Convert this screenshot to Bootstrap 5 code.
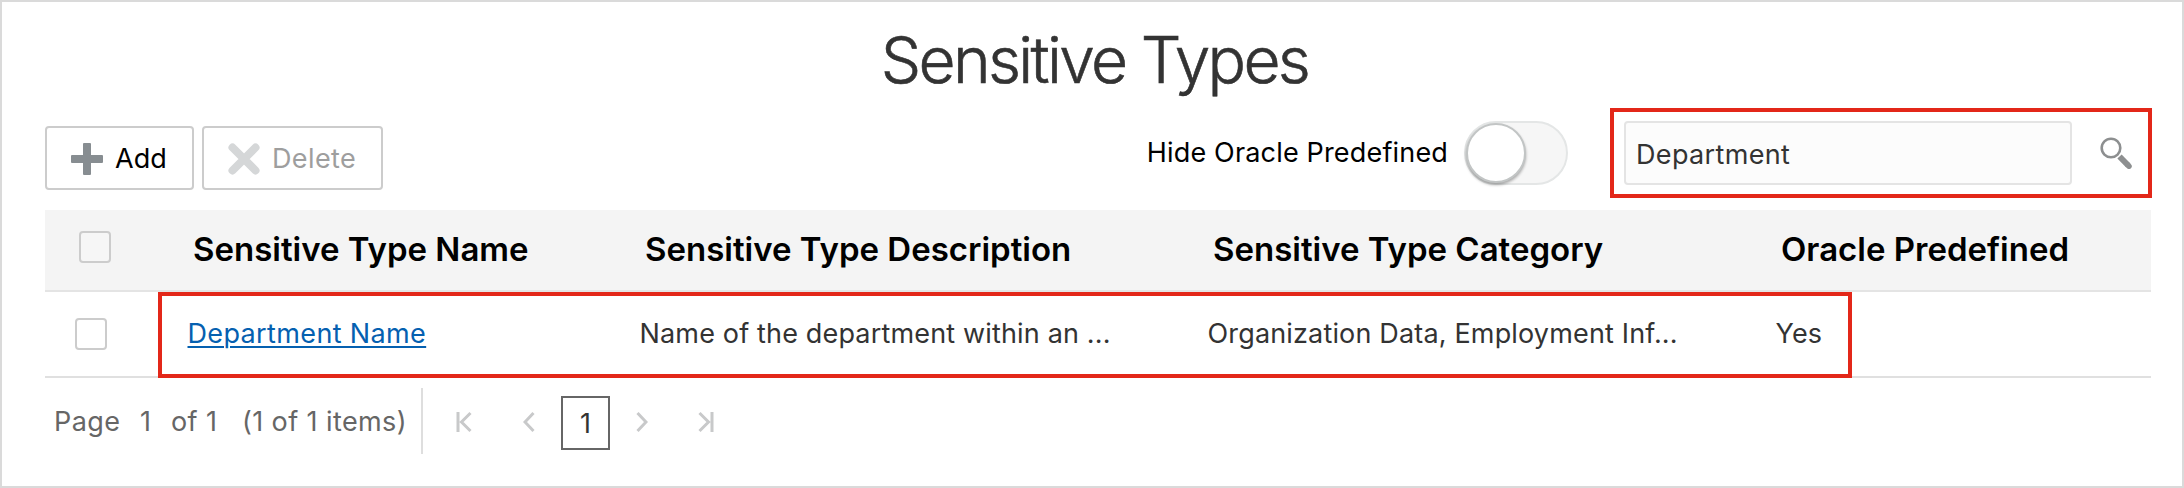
<!DOCTYPE html>
<html lang="en">
<head>
<meta charset="utf-8">
<title>Sensitive Types</title>
<link href="https://cdn.jsdelivr.net/npm/bootstrap@5.3.0/dist/css/bootstrap.min.css" rel="stylesheet">
<style>
  body { font-family: Inter, "Liberation Sans", sans-serif; font-size: 27px; line-height: 32px; color: #333; background: #fff; }
  .page-frame { height: 488px; border: 2px solid #dadada; padding: 0 30px 0 43px; overflow: hidden; }
  .page-title { font-size: 64px; font-weight: 300; line-height: 80px; letter-spacing: -2.68px; margin: 18px 0 0 0; padding-right: 8px; -webkit-text-stroke: .6px #333; }
  .toolbar { height: 90px; margin-top: 8px; }
  .tool-btn { height: 64px; margin-top: 18px; border: 2px solid #ccc; border-radius: 4px; padding: 2px 0 0 24px; font-size: 27px; gap: 12px; background: #fff; color: #000; }
  .tool-btn:disabled { color: #9e9e9e; border-color: #ccc; opacity: 1; background: #fff; }
  .add-btn { width: 149px; }
  .delete-btn { width: 181px; letter-spacing: .38px; }
  .hide-label { color: #000; letter-spacing: .17px; margin-right: 16px; }
  .toggle-track { width: 104px; height: 64px; border: 2px solid #e4e6e6; border-radius: 32px; background: #f6f6f6; margin-right: 42px; }
  .toggle-knob { width: 60px; height: 60px; border-radius: 50%; border: 2px solid #c2c5c5; background: #fff; box-shadow: 0 2px 3px rgba(0,0,0,.32); }
  .search-box { width: 542px; height: 90px; border: 4px solid #e32719; padding: 0 16px 0 10px; }
  .search-input { width: 448px; height: 64px; border: 2px solid #e4e4e4; border-radius: 4px; background: #fcfcfc; color: #333; padding: 2px 0 0 10px; font-size: 27px; letter-spacing: .34px; }
  .search-input:focus { box-shadow: none; }
  .type-grid { width: 2106px; margin-top: 12px; }
  .grid-line { display: grid; grid-template-columns: 113px 452px 568px 568px 1fr; align-items: center; }
  .grid-head { height: 82px; background: #f4f4f4; border-bottom: 2px solid #e4e4e4; font-size: 33px; font-weight: 600; line-height: 40px; color: #000; }
  .grid-head .cell { padding: 0 0 2px 35px; white-space: nowrap; }
  .grid-item { height: 86px; border-bottom: 2px solid #e0e0e0; }
  .grid-item .cell { padding-left: 29.5px; letter-spacing: .16px; white-space: nowrap; }
  .grid-item .name-link { letter-spacing: .36px; color: #0560b0; text-decoration-thickness: 2px; text-underline-offset: 3px; }
  .form-check-input.grid-check { width: 32px; height: 32px; margin: 0 0 0 30px; border: 2px solid #ccc; border-radius: 4px; background-color: #fff; }
  .grid-head .grid-check.form-check-input { margin: -6px 0 0 34px; background-color: #f6f6f6; }
  .row-highlight { left: 113px; top: 0; width: 1694px; height: 86px; border: 4px solid #e32719; pointer-events: none; }
  .pager { margin-top: 10px; height: 66px; color: #666; padding-left: 9px; }
  .pager .count { letter-spacing: .4px; white-space: pre; padding-top: 2px; }
  .pager .divider { width: 2px; height: 66px; background: #dedede; }
  .page-current { width: 49px; height: 54px; border: 2px solid #666; color: #333; padding-top: 1px; margin-top: 4px; }
  .pager svg { fill: none; stroke: #c8c9ca; stroke-width: 3; height: 22px; margin-top: 2px; flex: none; }
</style>
</head>
<body>
<main class="page-frame">
  <h1 class="page-title text-center">Sensitive Types</h1>

  <div class="toolbar d-flex">
    <button class="tool-btn add-btn d-flex align-items-center" type="button">
      <svg width="32" height="32" viewBox="0 0 32 32" aria-hidden="true"><path d="M13 0h6q1 0 1 1v11h11q1 0 1 1v6q0 1-1 1H20v11q0 1-1 1h-6q-1 0-1-1V20H1q-1 0-1-1v-6q0-1 1-1h11V1q0-1 1-1z" fill="#878d91"/></svg>
      <span>Add</span>
    </button>
    <button class="tool-btn delete-btn d-flex align-items-center ms-2" type="button" disabled>
      <svg width="32" height="32" viewBox="0 0 32 32" aria-hidden="true"><path d="M4.500 4.500l23 23M27.500 4.500l-23 23" stroke="#d5d7d8" stroke-width="8" stroke-linecap="round"/></svg>
      <span>Delete</span>
    </button>
    <div class="d-flex align-items-center ms-auto">
      <span class="hide-label">Hide Oracle Predefined</span>
      <div class="toggle-track" role="switch" aria-checked="false"><div class="toggle-knob"></div></div>
      <div class="search-box d-flex align-items-center justify-content-between">
        <input class="form-control search-input" type="text" value="Department" aria-label="Search">
        <svg width="32" height="32" viewBox="0 0 32 32" fill="none" stroke="#8d8f90" aria-hidden="true"><ellipse cx="11" cy="11" rx="9.3" ry="9.3" stroke-width="2.6"/><path d="M19.500 19.500l8.800 9" stroke-width="6"/><path d="M27.800 28l1.200 1.200" stroke-width="5.500" stroke-linecap="round"/></svg>
      </div>
    </div>
  </div>

  <section class="type-grid">
    <div class="grid-line grid-head">
      <input class="form-check-input grid-check" type="checkbox" aria-label="Select all">
      <div class="cell">Sensitive Type Name</div>
      <div class="cell">Sensitive Type Description</div>
      <div class="cell">Sensitive Type Category</div>
      <div class="cell">Oracle Predefined</div>
    </div>
    <div class="grid-line grid-item position-relative">
      <input class="form-check-input grid-check" type="checkbox" aria-label="Select row">
      <div class="cell"><a class="name-link" href="#">Department Name</a></div>
      <div class="cell">Name of the department within an ...</div>
      <div class="cell">Organization Data, Employment Inf...</div>
      <div class="cell">Yes</div>
      <div class="row-highlight position-absolute"></div>
    </div>
  </section>

  <nav class="pager d-flex align-items-center" aria-label="Pagination">
    <span class="count" style="width:86px">Page</span>
    <span class="count" style="width:31px">1</span>
    <span class="count" style="width:71px">of 1</span>
    <span class="count" style="width:179px">(1 of 1 items)</span>
    <span class="divider"></span>
    <svg width="16" viewBox="0 0 16 22" style="margin-left:33px"><path d="M2 1v20M14.500 2L5.500 11l9 9"/></svg>
    <svg width="12" viewBox="0 0 12 22" style="margin-left:51px"><path d="M10.500 2L2 11l8.500 9"/></svg>
    <span class="page-current d-flex align-items-center justify-content-center" style="margin-left:26px">1</span>
    <svg width="12" viewBox="0 0 12 22" style="margin-left:26px"><path d="M1.500 2L10 11l-8.500 9"/></svg>
    <svg width="16" viewBox="0 0 16 22" style="margin-left:50px"><path d="M1.500 2l9 9-9 9M14 1v20"/></svg>
  </nav>
</main>
<script src="https://cdn.jsdelivr.net/npm/bootstrap@5.3.0/dist/js/bootstrap.bundle.min.js"></script>
</body>
</html>
